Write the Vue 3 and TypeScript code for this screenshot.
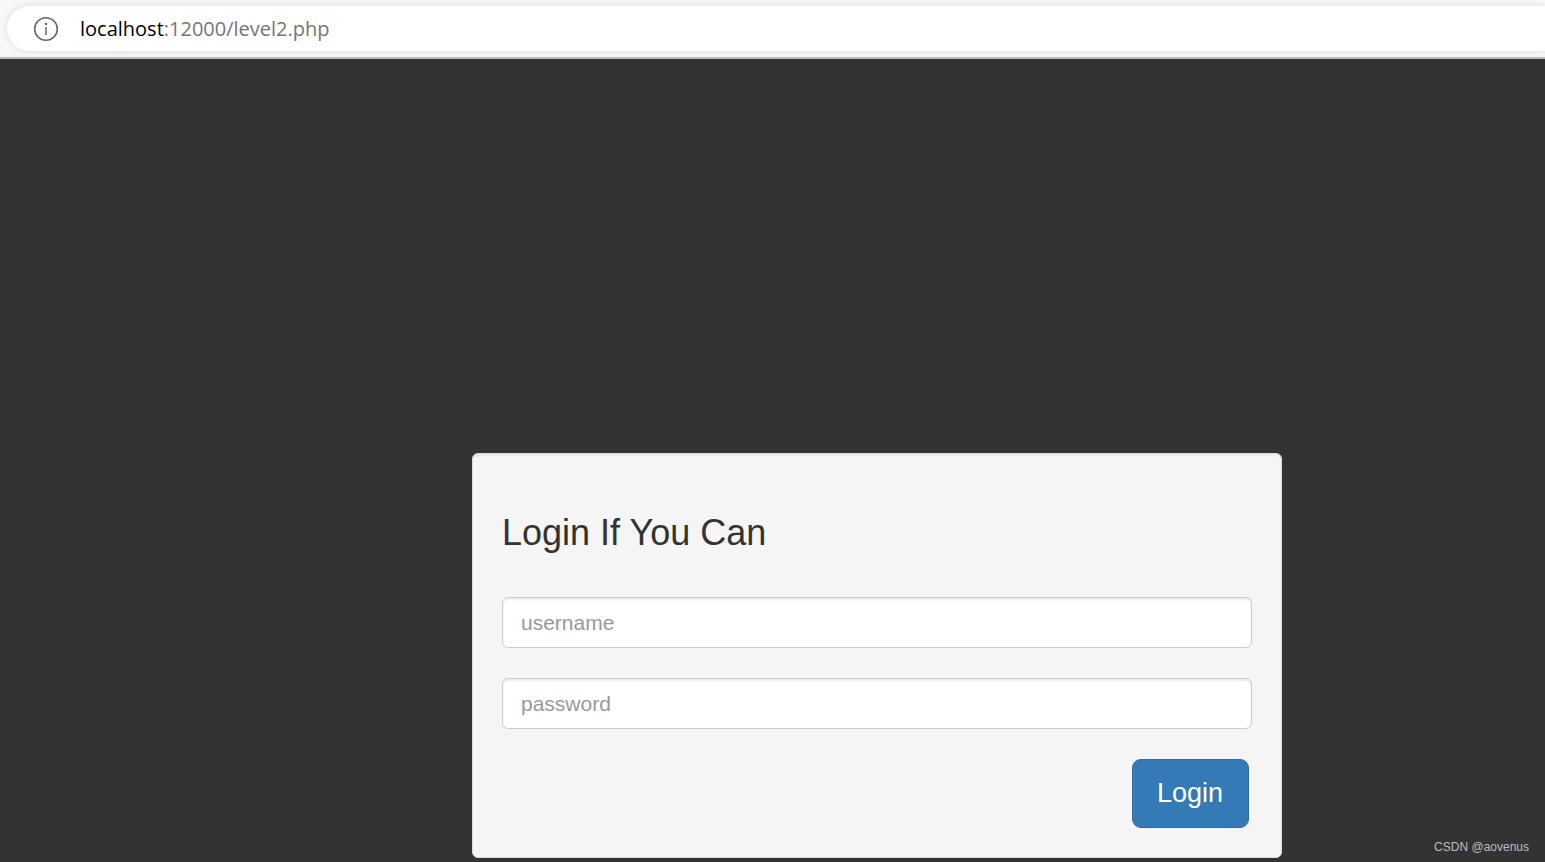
<script setup lang="ts">
import { ref } from 'vue'

const host = 'localhost'
const path = ':12000/level2.php'
const username = ref('')
const password = ref('')
</script>

<template>
  <div class="window">
    <header class="toolbar">
      <div class="address">
        <button class="info" type="button" aria-label="Site information">
          <svg viewBox="0 0 26 26" width="26" height="26" aria-hidden="true">
            <circle cx="13" cy="13" r="11.3" fill="none" stroke="#666" stroke-width="1.6" />
            <circle cx="13" cy="8" r="1.2" fill="#666" />
            <path d="M13 11v8" stroke="#666" stroke-width="1.5" />
          </svg>
        </button>
        <div class="url"><span class="host">{{ host }}</span>{{ path }}</div>
      </div>
    </header>
    <main class="page">
      <form class="card" @submit.prevent>
        <h1>Login If You Can</h1>
        <input v-model="username" type="text" placeholder="username" aria-label="username" />
        <input v-model="password" type="password" placeholder="password" aria-label="password" />
        <button class="login" type="submit">Login</button>
      </form>
      <div class="credit">CSDN @aovenus</div>
    </main>
  </div>
</template>

<style>
body {
  margin: 0;
  background: #333;
}
</style>

<style scoped>
.window {
  display: flex;
  flex-direction: column;
  min-height: 100vh;
  font-family: "Liberation Sans", Arial, sans-serif;
}

.toolbar {
  padding: 6px 0 6px 7px;
  background: #f7f7f7;
  border-bottom: 2px solid #b9b9b9;
  overflow: hidden;
}

.address {
  display: flex;
  align-items: center;
  gap: 21px;
  height: 45px;
  padding-left: 26px;
  background: #fff;
  border-radius: 23px 0 0 23px;
  box-shadow: 0 0 6px rgba(0, 0, 0, 0.12);
}

.info {
  display: flex;
  padding: 0;
  border: 0;
  background: none;
}

.url {
  font-family: "Segoe UI", "Open Sans", "Noto Sans", sans-serif;
  font-size: 20px;
  line-height: 30px;
  color: #767676;
}

.host {
  color: #000;
}

.page {
  position: relative;
  flex: 1;
  display: grid;
  grid-template-columns: 472fr 810fr 263fr;
  align-items: end;
  padding-bottom: 4px;
  background: #333;
}

.card {
  grid-column: 2;
  display: flex;
  flex-direction: column;
  gap: 30px;
  box-sizing: border-box;
  padding: 29px;
  background: #f5f5f5;
  border: 1px solid #dcdcdc;
  border-radius: 6px;
  box-shadow: inset 0 2px 2px rgba(0, 0, 0, 0.05);
}

h1 {
  margin: 30px 0 14px;
  font-size: 36px;
  line-height: 40px;
  font-weight: 400;
  color: #333;
}

input {
  box-sizing: border-box;
  width: 100%;
  height: 51px;
  padding: 0 18px;
  border: 1px solid #ccc;
  border-radius: 6px;
  background: #fff;
  box-shadow: inset 0 2px 2px rgba(0, 0, 0, 0.075);
  font: 21px/30px "Liberation Sans", Arial, sans-serif;
  color: #555;
}

input::placeholder {
  color: #999;
  opacity: 1;
}

.login {
  align-self: flex-end;
  margin-right: 3px;
  padding: 15px 25px 15px 24px;
  border: 1px solid #2e6da4;
  border-radius: 9px;
  background: #337ab7;
  font: 27px/37px "Liberation Sans", Arial, sans-serif;
  color: #fff;
}

.credit {
  position: absolute;
  right: 16px;
  bottom: 8px;
  font-size: 12px;
  line-height: 14px;
  color: #bbb;
}
</style>
